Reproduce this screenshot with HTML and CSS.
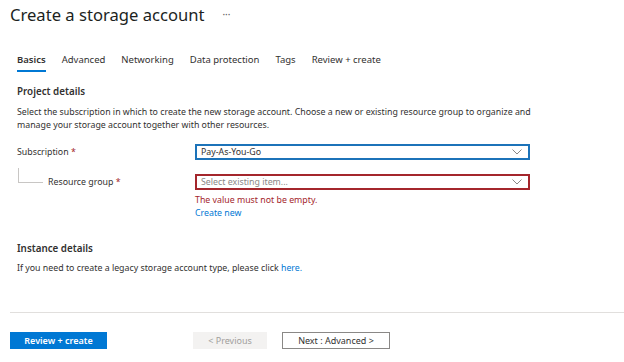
FILE: index.html
```html
<!DOCTYPE html>
<html lang="en">
<head>
    <meta charset="UTF-8">
    <meta name="viewport" content="width=device-width, initial-scale=1.0">
    <title>Create a storage account</title>
    <link rel="stylesheet" href="styles.css">
</head>
<body>
    <!-- Page header -->
    <div class="header">
        <h1>Create a storage account</h1>
        <span class="more">···</span>
    </div>

    <!-- Tabs -->
    <nav class="tabs">
        <a href="#" class="active">Basics</a>
        <a href="#">Advanced</a>
        <a href="#">Networking</a>
        <a href="#">Data protection</a>
        <a href="#">Tags</a>
        <a href="#">Review + create</a>
    </nav>

    <div class="content">
        <h2>Project details</h2>
        <p class="desc">Select the subscription in which to create the new storage account. Choose a new or existing resource group to organize and manage your storage account together with other resources.</p>

        <div class="field">
            <label>Subscription <span class="req">*</span></label>
            <div class="select focused">
                <span>Pay-As-You-Go</span>
                <svg class="chev" width="10" height="6" viewBox="0 0 10 6"><path d="M0.5 0.5 L5 5 L9.5 0.5" fill="none" stroke="#8a8886" stroke-width="1"/></svg>
            </div>
        </div>

        <div class="field sub">
            <label><span class="tree"></span><span>Resource group <span class="req">*</span></span></label>
            <div class="control">
                <div class="select invalid">
                    <span class="placeholder">Select existing item...</span>
                    <svg class="chev" width="10" height="6" viewBox="0 0 10 6"><path d="M0.5 0.5 L5 5 L9.5 0.5" fill="none" stroke="#8a8886" stroke-width="1"/></svg>
                </div>
                <div class="error">The value must not be empty.</div>
                <a href="#" class="link">Create new</a>
            </div>
        </div>

        <h2 class="instance">Instance details</h2>
        <p class="desc">If you need to create a legacy storage account type, please click <a href="#" class="link">here.</a></p>
    </div>

    <!-- Footer buttons -->
    <div class="footer">
        <button class="primary">Review + create</button>
        <button class="disabled">&lt; Previous</button>
        <button class="secondary">Next : Advanced &gt;</button>
    </div>
</body>
</html>
```
FILE: styles.css
```css
body {
    font-family: "Noto Sans", "Open Sans", sans-serif;
    color: #323130;
    margin: 0;
    padding: 0;
    font-size: 8.8px;
}

.header {
    display: flex;
    align-items: center;
    padding: 0 10px;
    height: 28px;
}

.header h1 {
    font-size: 16.6px;
    font-weight: 400;
    margin: 0;
    color: #201f1e;
}

.more {
    margin-left: 18px;
    font-size: 10px;
    color: #605e5c;
}

.tabs {
    display: flex;
    gap: 16px;
    padding: 25px 17px 0;
}

.tabs a {
    color: #323130;
    text-decoration: none;
    font-size: 9.5px;
    padding-bottom: 4px;
    border-bottom: 2px solid transparent;
}

.tabs a.active {
    font-weight: 600;
    border-bottom-color: #0078d4;
}

.content {
    padding: 13px 17px 0;
}

h2 {
    font-size: 9.8px;
    font-weight: 600;
    margin: 0 0 8px;
}

.desc {
    margin: 0;
    line-height: 13px;
    max-width: 530px;
}

.field {
    display: flex;
    align-items: flex-start;
    margin-top: 12px;
}

.field label {
    width: 178px;
    line-height: 16px;
}

.req {
    color: #a4262c;
}

.sub {
    margin-top: 14px;
}

.sub label {
    display: flex;
    align-items: center;
}

.tree {
    width: 24px;
    height: 14px;
    margin: -13px 5px 0 1px;
    border-left: 1px solid #c8c6c4;
    border-bottom: 1px solid #c8c6c4;
}

.control {
    width: 335px;
}

.select {
    width: 335px;
    height: 16px;
    box-sizing: border-box;
    border: 1px solid #8a8886;
    display: flex;
    align-items: center;
    justify-content: space-between;
    padding: 0 6px 0 5px;
}

.select.focused {
    border: 2px solid #1c73b9;
    padding-left: 4px;
}

.select.invalid {
    border: 2px solid #a4262c;
    padding-left: 4px;
}

.placeholder {
    color: #8a8886;
}

.error {
    color: #a4262c;
    margin-top: 4px;
    line-height: 13px;
}

.link {
    color: #0078d4;
    text-decoration: none;
}

.control .link {
    display: block;
    line-height: 13px;
}

.instance {
    margin-top: 22px;
    margin-bottom: 7px;
}

.footer {
    margin: 37px 0 0 10px;
    padding-top: 19px;
    border-top: 1px solid #e1dfdd;
    display: flex;
}

.footer button {
    font-family: inherit;
    font-size: 9px;
    height: 17px;
    padding: 0;
    cursor: pointer;
}

.primary {
    width: 97px;
    background-color: #0078d4;
    color: #fff;
    border: none;
    font-weight: 600;
    margin-right: 86px;
}

.disabled {
    width: 74px;
    background-color: #f3f2f1;
    color: #a19f9d;
    border: none;
    margin-right: 15px;
}

.secondary {
    width: 108px;
    background-color: #fff;
    color: #323130;
    border: 1px solid #8a8886;
}
```
